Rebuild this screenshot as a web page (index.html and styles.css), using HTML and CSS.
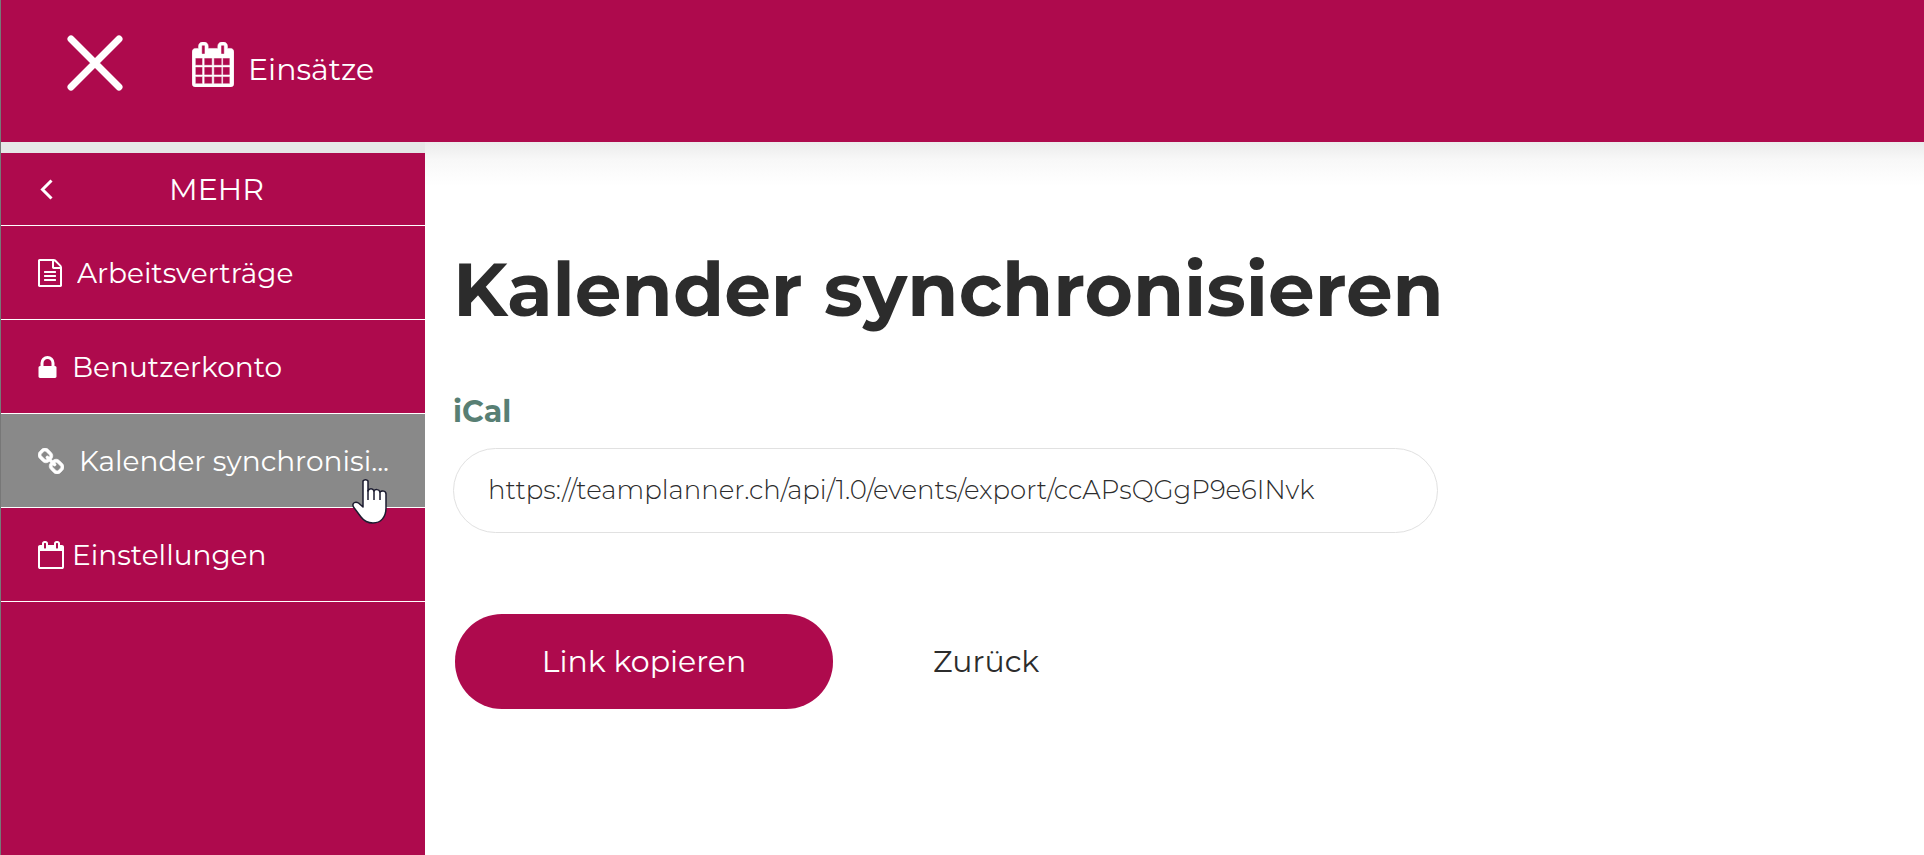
FILE: index.html
```html
<!DOCTYPE html>
<html lang="de">
<head>
<meta charset="utf-8">
<meta name="viewport" content="width=device-width, initial-scale=1">
<title>Kalender synchronisieren</title>
<link rel="stylesheet" href="styles.css">
</head>
<body>
<div class="app">
  <header class="topbar">
    <button class="close" type="button" aria-label="Menü schliessen">
      <svg class="icon-close" viewBox="0 0 56 56"><path d="M4 4 52 52M52 4 4 52" fill="none" stroke="currentColor" stroke-width="7" stroke-linecap="round"/></svg>
    </button>
    <a class="top-link" href="#">
      <svg class="icon-events" viewBox="0 0 1664 1792"><path fill="currentColor" stroke="currentColor" stroke-width="20" d="M128 1664h288v-288h-288v288zM480 1664h320v-288h-320v288zM128 1312h288v-320h-288v320zM480 1312h320v-320h-320v320zM128 928h288v-288h-288v288zM864 1664h320v-288h-320v288zM480 928h320v-288h-320v288zM1216 1664h288v-288h-288v288zM864 1312h320v-320h-320v320zM512 448v-288q0-13-9.500-22.500t-22.500-9.500h-64q-13 0-22.500 9.500t-9.500 22.500v288q0 13 9.500 22.500t22.500 9.500h64q13 0 22.500-9.500t9.500-22.500zM1216 1312h288v-320h-288v320zM864 928h320v-288h-320v288zM1216 928h288v-288h-288v288zM1280 448v-288q0-13-9.500-22.500t-22.500-9.500h-64q-13 0-22.500 9.500t-9.500 22.500v288q0 13 9.500 22.500t22.500 9.500h64q13 0 22.500-9.500t9.500-22.500zM1664 384v1280q0 52-38 90t-90 38h-1408q-52 0-90-38t-38-90v-1280q0-52 38-90t90-38h128v-96q0-66 47-113t113-47h64q66 0 113 47t47 113v96h384v-96q0-66 47-113t113-47h64q66 0 113 47t47 113v96h128q52 0 90 38t38 90z"/></svg>
      <span class="top-label">Einsätze</span>
    </a>
  </header>
  <div class="body">
    <nav class="sidebar" aria-label="Mehr">
      <button class="side-head" type="button">
        <svg class="icon-back" viewBox="0 0 13 21"><path d="M11.500 1.500 2.500 10.500l9 9" fill="none" stroke="currentColor" stroke-width="3"/></svg>
        <span class="side-title">MEHR</span>
      </button>
      <a class="side-item" href="#">
        <svg class="icon-file" viewBox="0 0 1536 1792"><path fill="currentColor" d="M1468 380q28 28 48 76t20 88v1152q0 40-28 68t-68 28h-1344q-40 0-68-28t-28-68v-1600q0-40 28-68t68-28h896q40 0 88 20t76 48zM1024 136v376h376q-10-29-22-41l-313-313q-12-12-41-22zM1408 1664v-1024h-416q-40 0-68-28t-28-68v-416h-768v1536h1280zM384 800q0-14 9-23t23-9h704q14 0 23 9t9 23v64q0 14-9 23t-23 9h-704q-14 0-23-9t-9-23v-64zM1120 1024q14 0 23 9t9 23v64q0 14-9 23t-23 9h-704q-14 0-23-9t-9-23v-64q0-14 9-23t23-9h704zM1120 1280q14 0 23 9t9 23v64q0 14-9 23t-23 9h-704q-14 0-23-9t-9-23v-64q0-14 9-23t23-9h704z"/></svg>
        <span class="side-label">Arbeitsverträge</span>
      </a>
      <a class="side-item" href="#">
        <svg class="icon-lock" viewBox="0 128 1152 1408"><path fill="currentColor" d="M320 768h512v-192q0-106-75-181t-181-75-181 75-75 181v192zM1152 864v576q0 40-28 68t-68 28h-960q-40 0-68-28t-28-68v-576q0-40 28-68t68-28h32v-192q0-184 132-316t316-132 316 132 132 316v192h32q40 0 68 28t28 68z"/></svg>
        <span class="side-label">Benutzerkonto</span>
      </a>
      <a class="side-item active" href="#" aria-current="page">
        <svg class="icon-link" viewBox="16 16 1632 1632"><path fill="currentColor" stroke="currentColor" stroke-width="40" d="M1456 1216q0-40-28-68l-208-208q-28-28-68-28-42 0-72 32 3 3 19 18.500t21.500 21.500 15 19 13 25.500 3.500 27.500q0 40-28 68t-68 28q-15 0-27.500-3.500t-25.500-13-19-15-21.500-21.500-18.500-19q-33 31-33 73 0 40 28 68l206 207q27 27 68 27 40 0 68-26l147-146q28-28 28-67zm-703-705q0-40-28-68l-206-207q-28-28-68-28-39 0-68 27l-147 146q-28 28-28 67 0 40 28 68l208 208q27 27 68 27 42 0 72-31-3-3-19-18.500t-21.500-21.500-15-19-13-25.500-3.500-27.500q0-40 28-68t68-28q15 0 27.500 3.500t25.500 13 19 15 21.500 21.500 18.500 19q33-31 33-73zm895 705q0 120-85 203l-147 146q-83 83-203 83-121 0-204-85l-206-207q-83-83-83-203 0-123 88-209l-88-88q-86 88-208 88-120 0-204-84l-208-208q-84-84-84-204t85-203l147-146q83-83 203-83 121 0 204 85l206 207q83 83 83 203 0 123-88 209l88 88q86-88 208-88 120 0 204 84l208 208q84 84 84 204z"/></svg>
        <span class="side-label">Kalender synchronisi...</span>
        <svg class="pointer" viewBox="0 0 36 48"><path d="M11 4a3 3 0 0 1 5 0V14c1-3 5-3 6 0 1-2 5-2 6 1 2-2 6-1 6 2V31c0 9-5 15-13 15-6 0-9-2-12-6L1.500 30c-2-4 2-6 5-4L11 30Z" fill="#fff" stroke="#1b1b2f" stroke-width="1.500" stroke-linejoin="round"/><path d="M16 13v10M22 14v9M28 15v8" fill="none" stroke="#1b1b2f" stroke-width="1.500"/></svg>
      </a>
      <a class="side-item tight" href="#">
        <svg class="icon-cal" viewBox="0 0 1664 1792"><path fill="currentColor" d="M128 1664h1408v-1024h-1408v1024zM512 448v-288q0-13-9.500-22.500t-22.500-9.500h-64q-13 0-22.500 9.500t-9.500 22.500v288q0 13 9.500 22.500t22.500 9.500h64q13 0 22.500-9.500t9.500-22.500zM1280 448v-288q0-13-9.500-22.500t-22.500-9.500h-64q-13 0-22.500 9.500t-9.500 22.500v288q0 13 9.500 22.500t22.500 9.500h64q13 0 22.500-9.500t9.500-22.500zM1664 384v1280q0 52-38 90t-90 38h-1408q-52 0-90-38t-38-90v-1280q0-52 38-90t90-38h128v-96q0-66 47-113t113-47h64q66 0 113 47t47 113v96h384v-96q0-66 47-113t113-47h64q66 0 113 47t47 113v96h128q52 0 90 38t38 90z"/></svg>
        <span class="side-label">Einstellungen</span>
      </a>
    </nav>
    <main class="content">
      <form class="sync">
        <h1 class="title">Kalender synchronisieren</h1>
        <label class="field-label" for="ical">iCal</label>
        <input class="field" id="ical" type="text" readonly value="https://teamplanner.ch/api/1.0/events/export/ccAPsQGgP9e6INvk">
        <div class="actions">
          <button class="btn primary" type="button">Link kopieren</button>
          <button class="btn plain" type="button">Zurück</button>
        </div>
      </form>
    </main>
  </div>
</div>
</body>
</html>
```
FILE: styles.css
```css
* {
  box-sizing: border-box;
}

body {
  margin: 0;
  background: #fff;
  color: #2c2c2c;
  font-family: Montserrat, Inter, sans-serif;
  font-size: 30px;
}

button,
input {
  font: inherit;
  color: inherit;
}

button {
  border: 0;
  padding: 0;
  background: none;
  cursor: pointer;
}

a {
  color: inherit;
  text-decoration: none;
}

svg {
  display: block;
  flex: none;
}

.app {
  display: flex;
  flex-direction: column;
  min-height: 100vh;
  border-left: 1px solid #777;
}

/* Header */
.topbar {
  display: flex;
  align-items: flex-start;
  gap: 69px;
  height: 142px;
  padding: 35px 66px;
  background: #ae0a4d;
  color: #fff;
}

.icon-close {
  width: 56px;
  height: 56px;
}

.top-link {
  display: flex;
  align-items: flex-start;
  gap: 14px;
  padding-top: 7px;
}

.icon-events {
  width: 42px;
  height: 45px;
}

.top-label {
  padding-top: 10px;
  line-height: 36px;
}

/* Sidebar */
.body {
  display: flex;
  flex: 1;
  background: linear-gradient(#ebebeb, #f8f8f8 18px, #fff 44px);
}

.sidebar {
  display: flex;
  flex-direction: column;
  flex: none;
  width: 424px;
  border-top: 11px solid #e7e7e7;
  background: #ae0a4d;
  color: #fff;
}

.side-head {
  display: flex;
  align-items: center;
  height: 73px;
  padding: 0 39px;
  border-bottom: 1px solid #fff;
}

.icon-back {
  width: 13px;
  height: 21px;
}

.side-title {
  flex: 1;
  padding-right: 6px;
  text-align: center;
}

.side-item {
  position: relative;
  display: flex;
  align-items: center;
  gap: 15px;
  height: 94px;
  padding: 0 16px 0 37px;
  border-bottom: 1px solid #fff;
  font-size: 28px;
}

.side-item.tight {
  gap: 8px;
}

.side-item.active {
  background: #898989;
}

.side-label {
  overflow: hidden;
  white-space: nowrap;
}

.icon-file {
  width: 24px;
  height: 28px;
}

.icon-lock {
  width: 19px;
  height: 22px;
}

.icon-link {
  width: 26px;
  height: 26px;
}

.icon-cal {
  width: 26px;
  height: 28px;
}

.pointer {
  position: absolute;
  z-index: 1;
  right: 37px;
  bottom: -18px;
  width: 36px;
  height: 48px;
}

/* Content */
.content {
  flex: 1;
  min-width: 0;
  padding: 104px 28px 40px;
}

.sync {
  display: flex;
  flex-direction: column;
  max-width: 985px;
}

.title {
  margin: 0;
  font-size: 74px;
  font-weight: 700;
  line-height: 88px;
  white-space: nowrap;
}

.field-label {
  margin-top: 60px;
  color: #587f74;
  font-weight: 700;
  line-height: 36px;
}

.field {
  width: 100%;
  height: 85px;
  margin-top: 18px;
  padding: 0 34px 2px;
  border: 1px solid #e1e1e1;
  border-radius: 43px;
  background: #fff;
  font-size: 26px;
  font-weight: 300;
}

.actions {
  display: flex;
  gap: 52px;
  margin-top: 81px;
  padding-left: 2px;
}

.btn {
  height: 95px;
  padding: 0 48px;
  border-radius: 47px;
}

.btn.primary {
  width: 378px;
  background: #ae0a4d;
  color: #fff;
}
```
